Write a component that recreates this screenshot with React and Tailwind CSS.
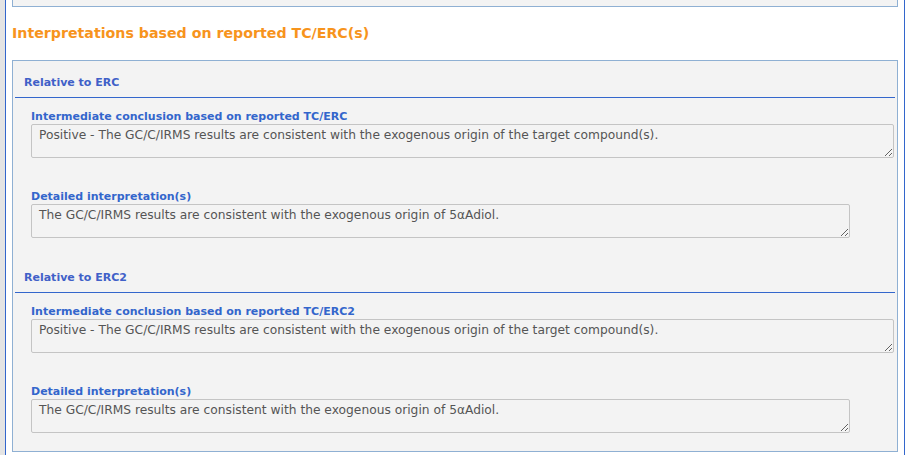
import { useState } from "react";

const font = { fontFamily: '"DejaVu Sans", Verdana, sans-serif' };

function Field({ label, value, wide }) {
  const [text, setText] = useState(value);
  return (
    <div>
      <div className="pt-[2px] text-[11px] font-bold leading-[14px] text-[#3366cc]">{label}</div>
      <textarea
        value={text}
        onChange={(event) => setText(event.target.value)}
        className={`block h-[34px] rounded-[2px] border border-[#c4c4c4] bg-[#f3f3f3] px-[7px] py-[3px] text-[12.25px] leading-[15px] text-[#555] outline-none ${wide ? "w-full" : "w-[819px]"}`}
        style={font}
      />
    </div>
  );
}

function Section({ title, tc }) {
  return (
    <div className="pb-[18px]">
      <div className="border-b border-[#3366cc] pb-[7px] pl-[9px] pt-[15px] text-[11px] font-bold leading-[14px] text-[#4060c8]">{title}</div>
      <div className="flex flex-col gap-[30px] pl-[16px] pr-[1px] pt-[10px]">
        <Field
          label={`Intermediate conclusion based on reported ${tc}`}
          value="Positive - The GC/C/IRMS results are consistent with the exogenous origin of the target compound(s)."
          wide
        />
        <Field label="Detailed interpretation(s)" value="The GC/C/IRMS results are consistent with the exogenous origin of 5αAdiol." />
      </div>
    </div>
  );
}

export default function App() {
  return (
    <div className="flex h-[455px] overflow-hidden bg-white" style={font}>
      <div className="w-[5px] shrink-0 bg-[#e4e4e4]" />
      <div className="flex-1 border-x border-[#3366cc] px-[6px]">
        <div className="h-[7px] border-x border-b border-[#8fb0d3] bg-[#f3f3f3]" />
        <h2 className="mb-[17px] mt-[16px] text-[14.2px] font-bold leading-[20px] text-[#f7941d]">Interpretations based on reported TC/ERC(s)</h2>
        <div className="border border-[#8fb0d3] bg-[#f3f3f3] px-[2px]">
          <Section title="Relative to ERC" tc="TC/ERC" />
          <Section title="Relative to ERC2" tc="TC/ERC2" />
        </div>
      </div>
    </div>
  );
}
